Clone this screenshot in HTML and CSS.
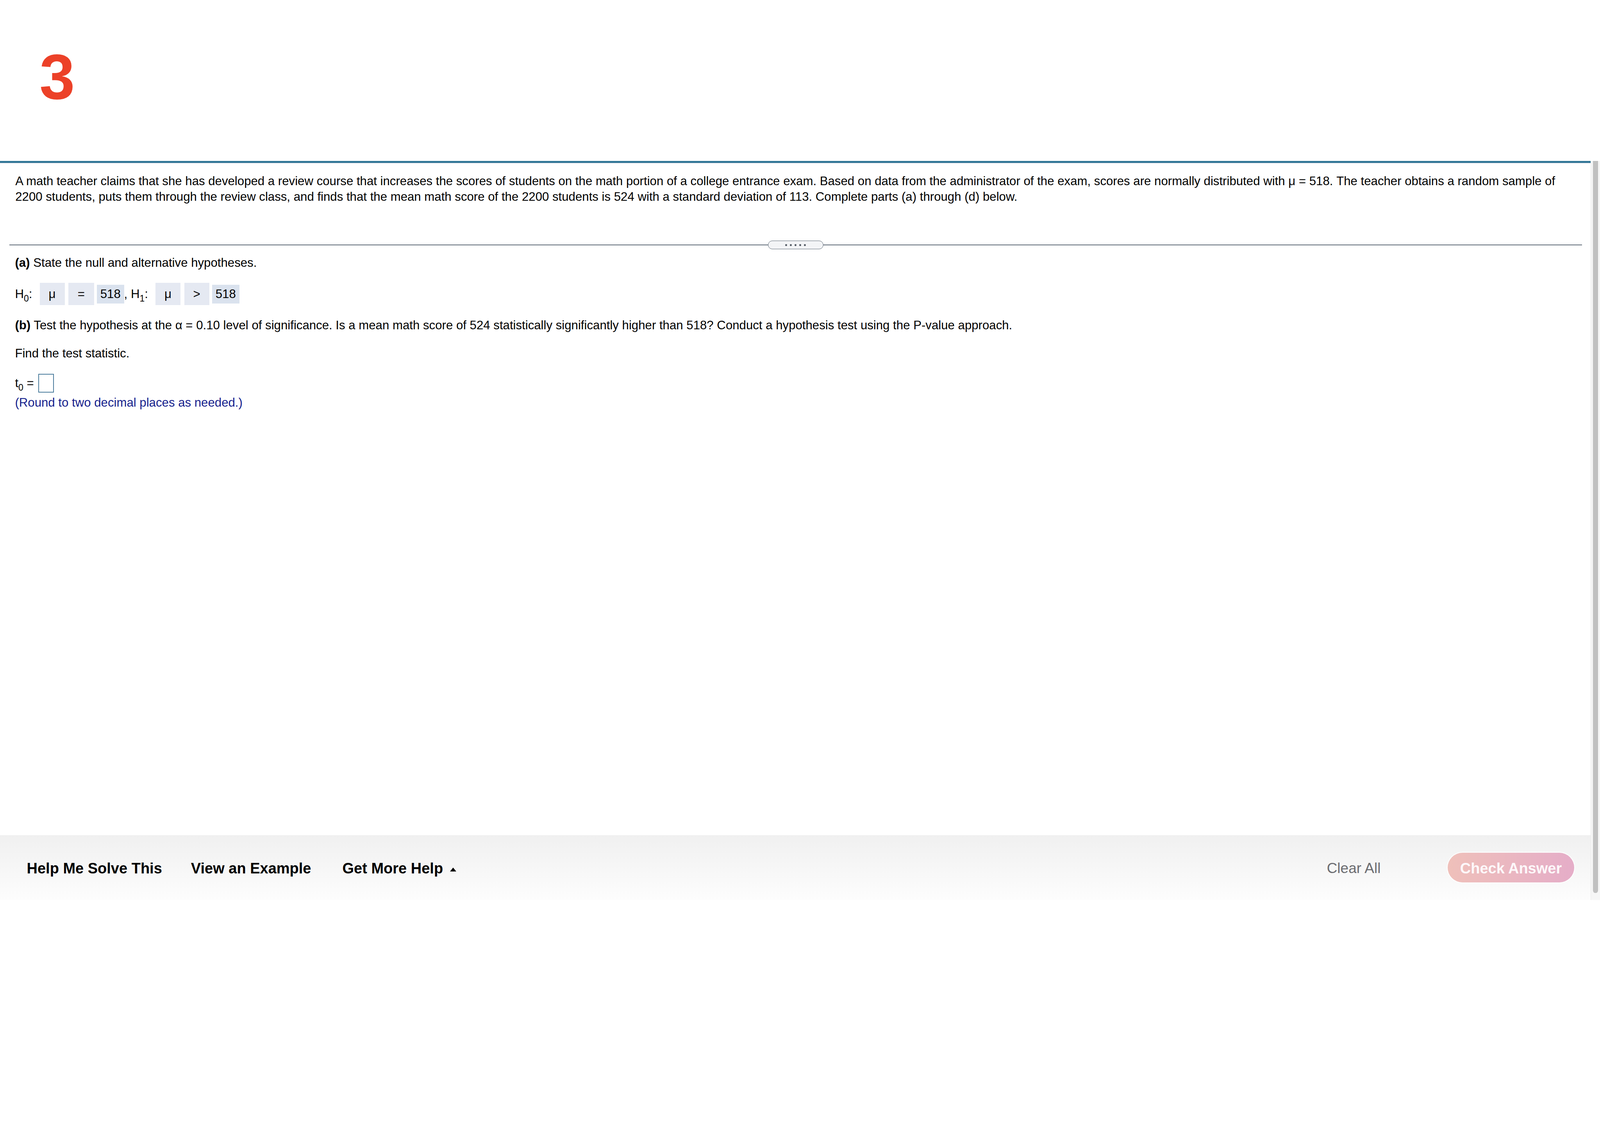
FILE: index.html
```html
<!DOCTYPE html>
<html lang="en">
<head>
<meta charset="utf-8">
<title>Question 3</title>
<link rel="stylesheet" href="styles.css">
</head>
<body>
<header class="header">
  <div class="qnum">3</div>
</header>
<div class="workspace">
  <div class="main">
    <div class="content">
      <p class="stem">A math teacher claims that she has developed a review course that increases the scores of students on the math portion of a college entrance exam. Based on data from the administrator of the exam, scores are normally distributed with μ = 518. The teacher obtains a random sample of 2200 students, puts them through the review class, and finds that the mean math score of the 2200 students is 524 with a standard deviation of 113. Complete parts (a) through (d) below.</p>
      <div class="divider">
        <div class="handle"><span class="dot"></span><span class="dot"></span><span class="dot"></span><span class="dot"></span><span class="dot"></span></div>
      </div>
      <div class="question">
        <p class="line"><b>(a)</b> State the null and alternative hypotheses.</p>
        <div class="hyp-row">
          <span class="label">H<sub class="sub">0</sub>:</span>
          <span class="dd lead">μ</span>
          <span class="dd">=</span>
          <span class="ans">518</span>
          <span class="label">, H<sub class="sub">1</sub>:</span>
          <span class="dd lead">μ</span>
          <span class="dd narrow">&gt;</span>
          <span class="ans">518</span>
        </div>
        <p class="line gap"><b>(b)</b> Test the hypothesis at the α = 0.10 level of significance. Is a mean math score of 524 statistically significantly higher than 518? Conduct a hypothesis test using the P-value approach.</p>
        <p class="line gap">Find the test statistic.</p>
        <div class="stat-row">
          <span class="label">t<sub class="sub">0</sub> =</span>
          <span class="input-box"></span>
        </div>
        <p class="line hint">(Round to two decimal places as needed.)</p>
      </div>
    </div>
    <footer class="footer">
      <nav class="help-links">
        <span class="link">Help Me Solve This</span>
        <span class="link">View an Example</span>
        <span class="link more">Get More Help <svg class="caret" width="16" height="10" viewBox="0 0 16 10"><path d="M8 0 L16 10 L0 10 Z" fill="#000"/></svg></span>
      </nav>
      <div class="actions">
        <span class="clear">Clear All</span>
        <span class="check">Check Answer</span>
      </div>
    </footer>
  </div>
  <div class="scrollbar"><div class="thumb"></div></div>
</div>
</body>
</html>
```
FILE: styles.css
```css
html, body {
  margin: 0;
  padding: 0;
}
body {
  width: 4096px;
  height: 2304px;
  overflow: hidden;
  background: #ffffff;
  font-family: "Liberation Sans", Arial, Helvetica, sans-serif;
  color: #000000;
}
.header {
  box-sizing: border-box;
  height: 412px;
  padding: 115px 0 0 101px;
}
.qnum {
  font-weight: bold;
  font-size: 163px;
  line-height: 163px;
  color: #ec4128;
}
.workspace {
  display: flex;
  height: 1892px;
}
.main {
  width: 4072px;
  display: flex;
  flex-direction: column;
  border-top: 5.6px solid #317696;
  box-sizing: border-box;
}
.content {
  flex: 1;
  border-top: 1.6px solid #cbd0df;
  padding: 26px 22.4px 0 24px;
}
.stem {
  margin: 0;
  padding: 0 17.6px 0 15.2px;
  font-size: 31.2px;
  line-height: 40px;
}
.divider {
  margin-top: 92px;
  height: 22.4px;
  display: flex;
  justify-content: center;
  background: linear-gradient(#5d6976, #5d6976) 0 10.2px / 100% 2px no-repeat;
}
.handle {
  box-sizing: border-box;
  width: 142.4px;
  height: 22.4px;
  border: 1.8px solid #5d6976;
  border-radius: 11.2px;
  background: #f3f4f6;
  display: flex;
  align-items: center;
  justify-content: center;
  gap: 7.2px;
}
.dot {
  width: 4.8px;
  height: 4.8px;
  border-radius: 2.4px;
  background: #4f5660;
}
.question {
  padding-left: 14.4px;
  margin-top: 15px;
  font-size: 31.2px;
}
.line {
  margin: 0;
  line-height: 40px;
}
.line.gap {
  margin-top: 32px;
}
.hyp-row {
  margin-top: 30.4px;
  height: 57.6px;
  display: flex;
  align-items: center;
  line-height: 40px;
}
.label {
  white-space: pre;
}
.sub {
  font-size: 23px;
  line-height: 0;
  vertical-align: -8.8px;
}
.dd {
  box-sizing: border-box;
  height: 57.6px;
  width: 65.6px;
  margin-left: 9.6px;
  background: #e5e9f2;
  display: flex;
  align-items: center;
  justify-content: center;
}
.dd.lead {
  margin-left: 19.2px;
  width: 64px;
}
.dd.narrow {
  width: 64px;
}
.ans {
  box-sizing: border-box;
  height: 48px;
  margin-left: 7.2px;
  padding: 0 8.8px;
  background: #dae2ee;
  display: flex;
  align-items: center;
}
.stat-row {
  margin-top: 32px;
  height: 48px;
  display: flex;
  align-items: center;
  line-height: 40px;
}
.input-box {
  box-sizing: border-box;
  width: 40px;
  height: 48px;
  margin-left: 11.2px;
  border: 2.4px solid #4b7c9c;
  background: #ffffff;
}
.hint {
  margin-top: 6px;
  color: #14208c;
}
.footer {
  box-sizing: border-box;
  height: 166.4px;
  display: flex;
  align-items: center;
  padding: 0 42.4px 0 68.5px;
  background: linear-gradient(#f0f0f0, #fdfdfd);
}
.help-links {
  display: flex;
  align-items: center;
  gap: 74px;
}
.link {
  padding-top: 4.8px;
  font-weight: bold;
  font-size: 38px;
  color: #000000;
  display: flex;
  align-items: center;
  white-space: pre;
}
.link.more {
  margin-left: 6px;
}
.caret {
  margin-left: 7px;
  margin-top: 6px;
}
.actions {
  margin-left: auto;
  display: flex;
  align-items: center;
  gap: 172px;
}
.clear {
  padding-top: 4.8px;
  font-size: 37px;
  color: #6b6c70;
}
.check {
  box-sizing: border-box;
  width: 323.2px;
  height: 76px;
  padding-top: 4.8px;
  border-radius: 38px;
  background: linear-gradient(90deg, #efc0ba, #e5adc8);
  box-shadow: 0 0 0 2.4px rgba(255, 255, 255, 0.7);
  color: #fdf8fa;
  font-weight: bold;
  font-size: 38px;
  line-height: 71.2px;
  text-align: center;
}
.scrollbar {
  box-sizing: border-box;
  width: 24px;
  background: #f6f6f6;
  border-left: 1.6px solid #ebebeb;
  padding-left: 4.8px;
}
.thumb {
  width: 12.8px;
  height: 1874px;
  background: #c1c1c1;
  border-radius: 0 0 6.4px 6.4px;
}
```
